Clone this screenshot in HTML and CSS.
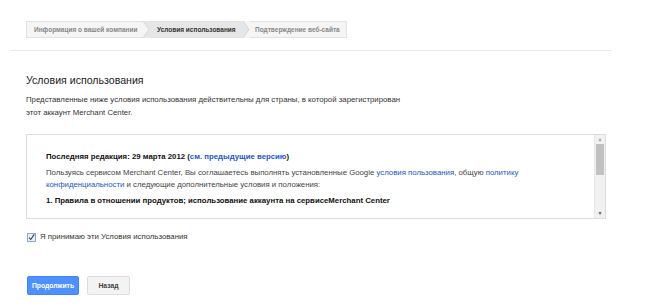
FILE: index.html
```html
<!DOCTYPE html>
<html lang="ru">
<head>
  <meta charset="UTF-8" />
  <title>Merchant Center</title>
  <link rel="stylesheet" href="styles.css">
</head>
<body>
  <div class="page">
    <div class="steps-bar">
      <div class="steps">
        <div class="step">Информация о вашей компании</div>
        <svg class="sep" width="7" height="17" viewBox="0 0 7 17">
          <rect width="7" height="17" fill="#e6e6e6"/>
          <polygon points="0,0 6,8.5 0,17" fill="#f5f5f5"/>
          <polyline points="0,0 6,8.5 0,17" fill="none" stroke="#d6d6d6" stroke-width="1"/>
        </svg>
        <div class="step active">Условия использования</div>
        <svg class="sep" width="7" height="17" viewBox="0 0 7 17">
          <rect width="7" height="17" fill="#f5f5f5"/>
          <polygon points="0,0 6,8.5 0,17" fill="#e6e6e6"/>
          <polyline points="0,0 6,8.5 0,17" fill="none" stroke="#d6d6d6" stroke-width="1"/>
        </svg>
        <div class="step">Подтверждение веб-сайта</div>
      </div>
    </div>

    <div class="content">
      <h1>Условия использования</h1>
      <p class="intro">Представленные ниже условия использования действительны для страны, в которой зарегистрирован<br>этот аккаунт Merchant Center.</p>

      <div class="terms-box">
        <div class="terms-text">
          <p class="bold">Последняя редакция: 29 марта 2012 (<a href="#">см. предыдущие версию</a>)</p>
          <p>Пользуясь сервисом Merchant Center, Вы соглашаетесь выполнять установленные Google <a href="#">условия пользования</a>, общую <a href="#">политику<br>конфиденциальности</a> и следующие дополнительные условия и положения:</p>
          <p class="bold">1. Правила в отношении продуктов; использование аккаунта на сервисеMerchant Center</p>
        </div>
        <div class="scrollbar">
          <span class="arrow">&#9650;</span>
          <div class="thumb"></div>
          <div class="track"></div>
          <span class="arrow">&#9660;</span>
        </div>
      </div>

      <label class="accept">
        <span class="checkbox">
          <svg width="9" height="9" viewBox="0 0 9 9"><polyline points="1.5,4.5 3.5,7 8,0.5" fill="none" stroke="#333" stroke-width="1.3"/></svg>
        </span>
        Я принимаю эти Условия использования
      </label>

      <div class="controls">
        <button class="btn btn-primary">Продолжить</button>
        <button class="btn">Назад</button>
      </div>
    </div>
  </div>
</body>
</html>
```

FILE: styles.css
```css
* {
  margin: 0;
  padding: 0;
  box-sizing: border-box;
}

body {
  font-family: 'Liberation Sans', Arial, sans-serif;
  background: white;
  color: #222;
}

.page {
  margin-left: 10px;
  width: 602px;
}

.steps-bar {
  padding: 18px 0 12px 16px;
  border-bottom: 1px solid #e8e8e8;
}

.steps {
  display: inline-flex;
  border: 1px solid #e2e2e2;
  background: #f5f5f5;
  height: 17px;
}

.step {
  font-size: 6.5px;
  font-weight: bold;
  color: #888;
  line-height: 15px;
  white-space: nowrap;
  overflow: hidden;
  padding-left: 7px;
}

.step:first-child {
  width: 116px;
}

.step.active {
  background: #e6e6e6;
  color: #333;
  width: 93px;
  padding-left: 7px;
}

.step:last-child {
  width: 96px;
  padding-left: 5px;
}

.sep {
  display: block;
  margin-top: -1px;
}

.content {
  padding: 22px 6px 0 16px;
}

h1 {
  font-size: 10.6px;
  line-height: 14px;
  font-weight: normal;
  color: #222;
  margin-bottom: 6px;
}

.intro {
  font-size: 7.8px;
  line-height: 13px;
  color: #333;
  margin-bottom: 15px;
}

.terms-box {
  display: flex;
  height: 85px;
  border: 1px solid #dcdcdc;
  background: white;
}

.terms-text {
  flex: 1;
  overflow: hidden;
  padding: 16px 0 0 19px;
  font-size: 7.8px;
  line-height: 12px;
  color: #444;
}

.terms-text p {
  margin-bottom: 4px;
}

.terms-text .bold {
  font-weight: bold;
  color: #111;
}

.terms-text a {
  color: #2255cc;
  text-decoration: none;
}

.scrollbar {
  width: 11px;
  background: #f1f1f1;
  border-left: 1px solid #e8e8e8;
  display: flex;
  flex-direction: column;
  align-items: center;
}

.arrow {
  font-size: 5px;
  line-height: 9px;
  color: #a0a0a0;
}

.arrow:last-child {
  color: #505050;
}

.thumb {
  width: 8px;
  height: 31px;
  background: #c1c1c1;
}

.track {
  flex: 1;
}

.accept {
  display: flex;
  align-items: center;
  gap: 4px;
  margin-top: 13px;
  margin-left: 1px;
  font-size: 7.8px;
  line-height: 10px;
  color: #333;
}

.checkbox {
  width: 9px;
  height: 9px;
  border: 1px solid #8ea6d6;
  background: #e8eef8;
  display: flex;
}

.checkbox svg {
  margin: -1px 0 0 0;
}

.controls {
  display: flex;
  gap: 8px;
  margin-top: 34px;
  margin-left: 1px;
}

.btn {
  font-family: 'Liberation Sans', Arial, sans-serif;
  font-size: 6.8px;
  font-weight: bold;
  height: 19px;
  width: 43px;
  border: 1px solid #dcdcdc;
  border-radius: 2px;
  background: #f3f3f3;
  color: #444;
}

.btn-primary {
  width: 52px;
  background: #4d90fe;
  border-color: #3f84f4;
  color: white;
}
```
